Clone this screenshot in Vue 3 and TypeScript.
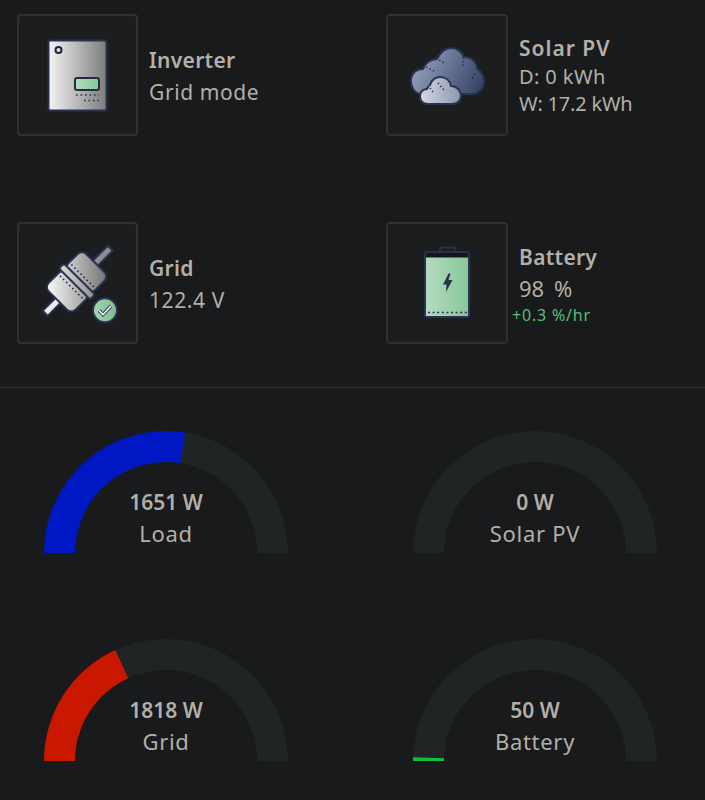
<template>
  <div class="page">
    <section class="stats">
      <div class="stat">
        <div class="icon-box">
          <svg class="icon" viewBox="27 25 100 100">
            <defs>
              <linearGradient id="metal" x1="0" x2="1" y1="0" y2="0">
                <stop offset="0" stop-color="#f4f4f4" />
                <stop offset="1" stop-color="#7c7c7c" />
              </linearGradient>
              <linearGradient id="screen" x1="0" x2="1" y1="0" y2="0">
                <stop offset="0" stop-color="#b4dcc0" />
                <stop offset="1" stop-color="#88c69a" />
              </linearGradient>
            </defs>
            <rect x="47.5" y="40.5" width="58" height="70" rx="2" fill="url(#metal)" stroke="#29324f" stroke-width="2" />
            <circle cx="57.5" cy="50" r="3" fill="none" stroke="#1f2638" stroke-width="2" />
            <rect x="74" y="78" width="24" height="12" rx="2" fill="url(#screen)" stroke="#232b45" stroke-width="2" />
            <line x1="75" y1="95" x2="98" y2="95" class="dots" stroke-dasharray="1.6 2.9" />
            <line x1="83" y1="100.5" x2="98" y2="100.5" class="dots" stroke-dasharray="1.6 2.9" />
          </svg>
        </div>
        <div class="info">
          <div class="title">Inverter</div>
          <div class="line">Grid mode</div>
        </div>
      </div>

      <div class="stat">
        <div class="icon-box">
          <svg class="icon" viewBox="397 25 100 100">
            <defs>
              <linearGradient id="cloudBig" x1="0" x2="1" y1="0.3" y2="0.6">
                <stop offset="0" stop-color="#98a3bf" />
                <stop offset="1" stop-color="#39476a" />
              </linearGradient>
              <linearGradient id="cloudSmall" x1="0" x2="1" y1="0" y2="0">
                <stop offset="0" stop-color="#d6d9e3" />
                <stop offset="1" stop-color="#8b95b1" />
              </linearGradient>
            </defs>
            <path d="M423 94 C414 94 411 87 411 81 C411 74 416 69 423 69 C425 63 431 59 437 59 C440 52 446 48 451 48 C457 48 462 52 464 57 C471 57 477 62 477 69 C481 71 484 76 484 81 C484 88 479 94 472 94 Z" fill="url(#cloudBig)" stroke="#2a3450" stroke-width="2" />
            <path d="M428 104 C423 104 420 101 420 96 C420 92 423 89 427 89 C428 87 429 85 430 85 C431 80 436 77 440 77 C446 77 450 81 451 86 C457 86 461 91 461 96 C461 101 457 104 452 104 Z" fill="url(#cloudSmall)" stroke="#2a3450" stroke-width="2" />
            <path d="M426 67 L434 71 M436 58 L444 63 M463 57 L463 66 M475 74 L472 79 M438 83 L444 90 M430 88 L433 92" class="dots" stroke-dasharray="1.4 2.4" />
          </svg>
        </div>
        <div class="info solar">
          <div class="title wide">Solar PV</div>
          <div class="line tight">D: 0 kWh</div>
          <div class="line tight narrow">W: 17.2 kWh</div>
        </div>
      </div>

      <div class="stat">
        <div class="icon-box">
          <svg class="icon" viewBox="27 233.5 100 100">
            <defs>
              <linearGradient id="plug" gradientUnits="userSpaceOnUse" x1="50" x2="105" y1="282" y2="282" gradientTransform="rotate(-45 76 282)">
                <stop offset="0" stop-color="#f0f0f0" />
                <stop offset="1" stop-color="#757575" />
              </linearGradient>
              <linearGradient id="badge" x1="0" x2="1" y1="0" y2="0">
                <stop offset="0" stop-color="#a6d6b4" />
                <stop offset="1" stop-color="#79bd8e" />
              </linearGradient>
            </defs>
            <g transform="rotate(45 76 282)" stroke="#29324f" stroke-width="2">
              <rect x="72.5" y="235" width="7" height="24" fill="#8d8d8d" />
              <rect x="72.5" y="305" width="7" height="22" fill="#eeeeee" />
              <rect x="57" y="256" width="38" height="25" rx="6" fill="url(#plug)" />
              <rect x="57" y="283" width="38" height="26" rx="6" fill="url(#plug)" />
              <rect x="54" y="278.5" width="44" height="7" rx="2.5" fill="url(#plug)" />
              <line x1="60" y1="274" x2="92" y2="274" class="dots" stroke-dasharray="1.6 2.7" />
              <line x1="60" y1="290" x2="92" y2="290" class="dots" stroke-dasharray="1.6 2.7" />
            </g>
            <circle cx="104" cy="310.7" r="12" fill="url(#badge)" stroke="#29324f" stroke-width="2" />
            <polyline points="98,311 102,315 110,306.5" fill="none" stroke="#29324f" stroke-width="3.4" />
            <polyline points="98,311 102,315 110,306.5" fill="none" stroke="#ffffff" stroke-width="1.6" />
          </svg>
        </div>
        <div class="info">
          <div class="title">Grid</div>
          <div class="line">122.4 V</div>
        </div>
      </div>

      <div class="stat">
        <div class="icon-box">
          <svg class="icon" viewBox="397 233.5 100 100">
            <rect x="440" y="248" width="15" height="6" rx="1.5" fill="#1c1e22" stroke="#29324f" stroke-width="2" />
            <rect x="425" y="252.5" width="44" height="65" rx="2" fill="#15171a" stroke="#29324f" stroke-width="2" />
            <rect x="426" y="258" width="42" height="58.5" fill="url(#screen)" />
            <path d="M448.5 274 L443 285 L446.5 285 L446 292.5 L452.5 280.5 L448.5 280.5 L450.5 274 Z" fill="#29324f" />
            <line x1="428" y1="313" x2="467" y2="313" class="dots" stroke-dasharray="2 2.6" stroke-width="2" />
          </svg>
        </div>
        <div class="info battery">
          <div class="title">Battery</div>
          <div class="line percent">98 %</div>
          <div class="rate">+0.3 %/hr</div>
        </div>
      </div>
    </section>

    <section class="gauges">
      <div v-for="g in gauges" :key="g.label" class="gauge">
        <svg class="arc" width="244" height="122" viewBox="0 0 244 122">
          <path :d="arcPath(1)" fill="#202424" />
          <path :d="arcPath(g.value / g.max)" :fill="g.color" />
        </svg>
        <div class="readout">
          <div class="watts">{{ g.value }} W</div>
          <div class="name">{{ g.label }}</div>
        </div>
      </div>
    </section>
  </div>
</template>

<script setup lang="ts">
interface Gauge {
  label: string
  value: number
  max: number
  color: string
}

const gauges: Gauge[] = [
  { label: 'Load', value: 1651, max: 3000, color: '#0017c4' },
  { label: 'Solar PV', value: 0, max: 3000, color: '#0dc13f' },
  { label: 'Grid', value: 1818, max: 5000, color: '#c91700' },
  { label: 'Battery', value: 50, max: 5000, color: '#0dc13f' },
]

// half ring, filled clockwise from the left end
function arcPath(frac: number): string {
  const R = 122
  const r = 91
  const a = Math.PI * (1 - frac)
  const ox = (R + R * Math.cos(a)).toFixed(2)
  const oy = (R - R * Math.sin(a)).toFixed(2)
  const ix = (R + r * Math.cos(a)).toFixed(2)
  const iy = (R - r * Math.sin(a)).toFixed(2)
  return `M0 ${R} A${R} ${R} 0 0 1 ${ox} ${oy} L${ix} ${iy} A${r} ${r} 0 0 0 ${R - r} ${R} Z`
}
</script>

<style scoped>
.page {
  width: 705px;
  height: 800px;
  overflow: hidden;
  color: #b3afa8;
  font-family: "Noto Sans", sans-serif;
}
.stats {
  display: grid;
  grid-template-columns: 369px 1fr;
  grid-auto-rows: 208px;
  padding: 14px 0 0 17px;
  height: 388px;
  box-sizing: border-box;
  border-bottom: 1px solid #333537;
}
.stat {
  display: flex;
  align-items: flex-start;
  gap: 11px;
}
.icon-box {
  width: 121px;
  height: 122px;
  flex: none;
  box-sizing: border-box;
  border: 2px solid #2e3032;
  border-radius: 4px;
  background: #1b1d1f;
  display: flex;
  align-items: center;
  justify-content: center;
}
.stat:nth-child(even) .icon-box {
  width: 122px;
}
.icon {
  width: 100px;
  height: 100px;
}
.dots {
  fill: none;
  stroke: #29324f;
  stroke-width: 1.6;
}
.info {
  height: 122px;
  box-sizing: border-box;
  padding-top: 4px;
  display: flex;
  flex-direction: column;
  justify-content: center;
}
.info.solar,
.info.battery {
  padding-top: 0;
}
.title {
  font-size: 21px;
  line-height: 30px;
  font-weight: 600;
  letter-spacing: 0.3px;
}
.title.wide {
  letter-spacing: 1px;
}
.line {
  font-size: 21px;
  line-height: 35px;
  letter-spacing: 0.6px;
}
.tight {
  font-size: 20px;
  line-height: 27px;
  letter-spacing: 0.4px;
}
.narrow {
  letter-spacing: -0.2px;
}
.percent {
  line-height: 32px;
  font-size: 22px;
  letter-spacing: 0;
  word-spacing: 4px;
}
.rate {
  margin: 1px 0 0 -7px;
  font-size: 16px;
  line-height: 20px;
  letter-spacing: 0.8px;
  color: #57bf77;
}
.gauges {
  display: grid;
  grid-template-columns: 369px 1fr;
  grid-auto-rows: 208px;
  padding: 43px 0 0 44px;
}
.gauge {
  position: relative;
  width: 244px;
  height: 122px;
}
.arc {
  display: block;
}
.readout {
  position: absolute;
  left: 0;
  right: 0;
  bottom: 4px;
  text-align: center;
}
.watts {
  font-size: 21px;
  line-height: 32px;
  font-weight: 600;
  margin-bottom: -1px;
}
.name {
  font-size: 22px;
  line-height: 32px;
  letter-spacing: 0.7px;
}
</style>

<style>
html,
body {
  margin: 0;
  background: #181a1c;
}
</style>
